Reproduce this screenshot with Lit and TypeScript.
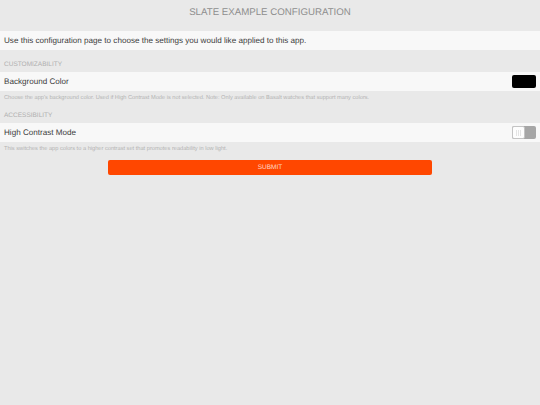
import { LitElement, html, css } from "lit";
import { customElement } from "lit/decorators.js";

@customElement("app-root")
export class AppRoot extends LitElement {
  static styles = css`
    :host {
      display: block;
      width: 540px;
      height: 405px;
      overflow: hidden;
      background: #e9e9e9;
      font-family: "Liberation Sans", Arial, sans-serif;
      color: #333;
      text-rendering: geometricPrecision;
    }
    .title {
      height: 25px;
      margin: 0;
      display: flex;
      align-items: center;
      justify-content: center;
      font-size: 9.7px;
      font-weight: normal;
      color: #8e8e8e;
    }
    .intro {
      margin-top: 6px;
      height: 19px;
      padding: 0 4px;
      display: flex;
      align-items: center;
      background: #f8f8f8;
      font-size: 8.1px;
      color: #3c3c3c;
    }
    .section {
      height: 22px;
      padding: 0 4px 3px;
      display: flex;
      align-items: flex-end;
      box-sizing: border-box;
      font-size: 6.5px;
      line-height: 8px;
      color: #b0b0b0;
    }
    .row {
      height: 19px;
      padding: 0 4px;
      display: flex;
      align-items: center;
      justify-content: space-between;
      background: #f8f8f8;
      font-size: 8.1px;
      color: #3c3c3c;
    }
    .desc {
      padding: 3.5px 4px 0;
      height: 10px;
      box-sizing: border-box;
      font-size: 5.66px;
      line-height: 7px;
      color: #b4b4b4;
      white-space: nowrap;
    }
    .swatch {
      width: 24px;
      height: 13px;
      border-radius: 2px;
      background: #000;
    }
    .toggle {
      width: 24px;
      height: 13px;
      border-radius: 2px;
      background: #a6a6a6;
      display: flex;
    }
    .knob {
      width: 13px;
      height: 13px;
      box-sizing: border-box;
      border: 1px solid #c4c4c4;
      border-radius: 2px;
      background: #fdfdfd;
      display: flex;
      align-items: center;
      justify-content: center;
      gap: 1px;
    }
    .knob i {
      width: 1px;
      height: 6px;
      background: #e4e4e4;
    }
    .actions {
      margin-top: 8px;
      display: flex;
      justify-content: center;
    }
    .submit {
      width: 324px;
      height: 15px;
      padding: 0;
      border: 0;
      border-radius: 2px;
      background: #ff4700;
      color: #ffd9c8;
      font: 6.5px "Liberation Sans", Arial, sans-serif;
      text-rendering: geometricPrecision;
    }
  `;

  render() {
    return html`
      <h1 class="title">SLATE EXAMPLE CONFIGURATION</h1>
      <div class="intro">Use this configuration page to choose the settings you would like applied to this app.</div>
      <div class="section">CUSTOMIZABILITY</div>
      <div class="row"><span>Background Color</span><div class="swatch"></div></div>
      <div class="desc">Choose the app's background color. Used if High Contrast Mode is not selected. Note: Only available on Basalt watches that support many colors.</div>
      <div class="section">ACCESSIBILITY</div>
      <div class="row"><span>High Contrast Mode</span><div class="toggle"><div class="knob"><i></i><i></i><i></i></div></div></div>
      <div class="desc">This switches the app colors to a higher contrast set that promotes readability in low light.</div>
      <div class="actions"><button class="submit">SUBMIT</button></div>
    `;
  }
}
